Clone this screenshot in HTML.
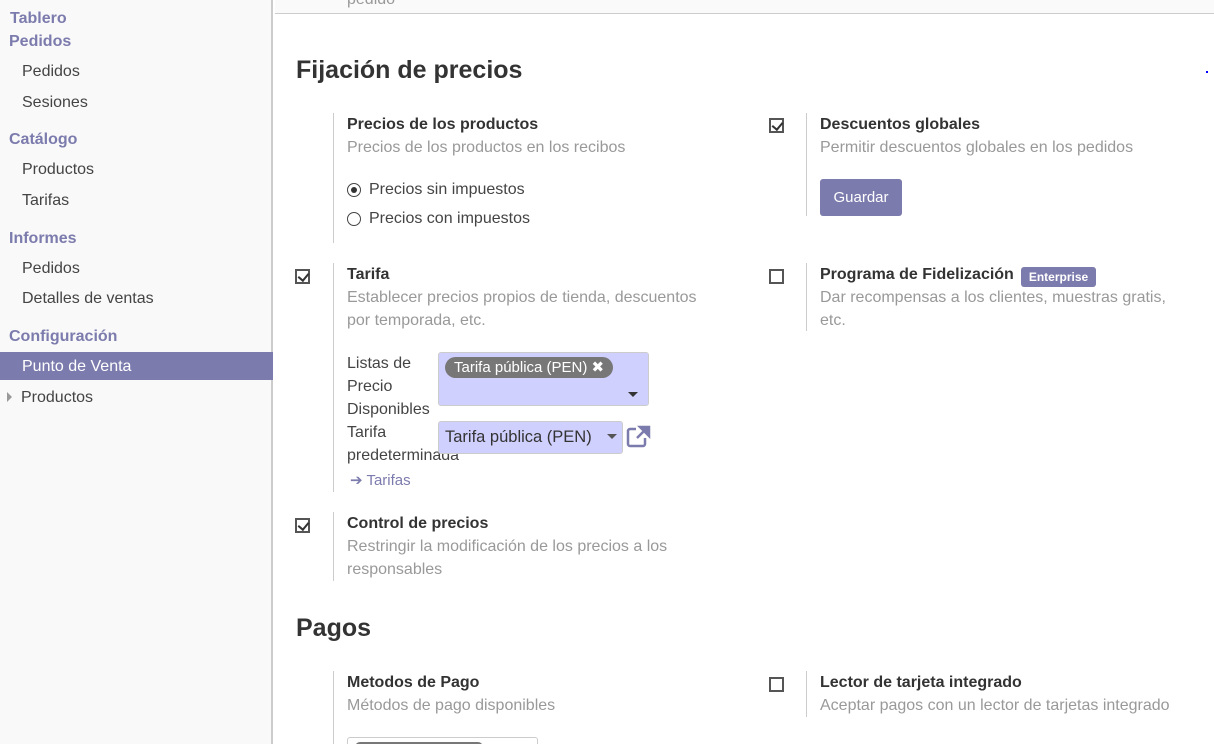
<!DOCTYPE html>
<html style="overflow:hidden;height:744px"><head><meta charset="utf-8"><style>
*{box-sizing:border-box;margin:0;padding:0}
body{width:1214px;height:744px;overflow:hidden;font-family:"Liberation Sans",sans-serif;font-size:16px;color:#444;background:#fff;position:relative}
.sb{position:absolute;left:0;top:0;width:273px;height:744px;background:#f9f9f9;border-right:2px solid #ccc}
.a{position:absolute;white-space:nowrap}
.h{color:#7c7bad;font-weight:bold;font-size:16px}
.it{color:#444;font-size:16px}
.act{position:absolute;left:0;top:352px;width:273px;height:28px;background:#7c7bad}
.t{font-weight:bold;color:#333;font-size:16px}
.d{color:#999;font-size:16px;line-height:23px}
.vl{position:absolute;width:1px;background:#ccc}
.cb{position:absolute;width:15px;height:15px;border:2px solid #555;background:#fff}
.cb.c::after{content:"";position:absolute;left:3px;top:0px;width:5px;height:8px;border:solid #333;border-width:0 2px 2px 0;transform:rotate(40deg)}
.rd{position:absolute;width:14px;height:14px;border:1px solid #444;border-radius:50%}
.rd.on::after{content:"";position:absolute;left:3px;top:3px;width:6px;height:6px;border-radius:50%;background:#333}
.sec{font-size:25px;font-weight:bold;color:#333}
</style></head><body>
<div class="sb">
<div class="a h" style="left:10px;top:10px">Tablero</div>
<div class="a h" style="left:9px;top:33px">Pedidos</div>
<div class="a it" style="left:22px;top:63px">Pedidos</div>
<div class="a it" style="left:22px;top:94px">Sesiones</div>
<div class="a h" style="left:9px;top:131px">Catálogo</div>
<div class="a it" style="left:22px;top:161px">Productos</div>
<div class="a it" style="left:22px;top:192px">Tarifas</div>
<div class="a h" style="left:9px;top:230px">Informes</div>
<div class="a it" style="left:22px;top:260px">Pedidos</div>
<div class="a it" style="left:22px;top:290px">Detalles de ventas</div>
<div class="a h" style="left:9px;top:328px">Configuración</div>
<div class="act"></div>
<div class="a it" style="left:22px;top:358px;color:#fff">Punto de Venta</div>
<div class="a" style="left:7px;top:392px;width:0;height:0;border-left:5px solid #999;border-top:5px solid transparent;border-bottom:5px solid transparent"></div>
<div class="a it" style="left:21px;top:389px">Productos</div>
</div>
<div class="a" style="left:275px;top:0;width:939px;height:14px;background:#fafafa;border-bottom:1px solid #ccc;overflow:hidden"><span class="a d" style="left:72px;top:-12px">pedido</span></div>
<div class="a" style="left:1206px;top:71px;width:2px;height:2px;background:#00f"></div>

<div class="a sec" style="left:296px;top:56px">Fijación de precios</div>

<div class="vl" style="left:333px;top:113px;height:130px"></div>
<div class="a t" style="left:347px;top:116px">Precios de los productos</div>
<div class="a d" style="left:347px;top:136px">Precios de los productos en los recibos</div>
<div class="rd on" style="left:347px;top:183px"></div>
<div class="a it" style="left:369px;top:181px">Precios sin impuestos</div>
<div class="rd" style="left:347px;top:212px"></div>
<div class="a it" style="left:369px;top:210px">Precios con impuestos</div>

<div class="cb c" style="left:769px;top:118px"></div>
<div class="vl" style="left:806px;top:113px;height:103px"></div>
<div class="a t" style="left:820px;top:116px">Descuentos globales</div>
<div class="a d" style="left:820px;top:136px">Permitir descuentos globales en los pedidos</div>
<div class="a" style="left:820px;top:179px;width:82px;height:37px;background:#7c7bad;border-radius:3px;color:#fff;text-align:center;line-height:37px;font-size:15px">Guardar</div>

<div class="cb c" style="left:295px;top:269px"></div>
<div class="vl" style="left:333px;top:263px;height:229px"></div>
<div class="a t" style="left:347px;top:266px">Tarifa</div>
<div class="a d" style="left:347px;top:286px">Establecer precios propios de tienda, descuentos<br>por temporada, etc.</div>
<div class="a it" style="left:347px;top:352px;line-height:23px">Listas de<br>Precio<br>Disponibles<br>Tarifa<br>predeterminada</div>
<div class="a" style="left:438px;top:352px;width:211px;height:54px;background:#d0d0ff;border:1px solid #ccc;border-radius:3px"></div>
<div class="a" style="left:445px;top:357px;height:21px;padding:0 9px;background:#777;color:#fff;border-radius:11px;line-height:21px;font-size:15px">Tarifa pública (PEN) ✖</div>
<div class="a" style="left:628px;top:392px;border-top:5px solid #333;border-left:5px solid transparent;border-right:5px solid transparent"></div>
<div class="a" style="left:438px;top:421px;width:185px;height:33px;background:#d0d0ff;border:1px solid #ccc;border-radius:3px"></div>
<div class="a it" style="left:445px;top:428px;color:#333;font-size:16.5px">Tarifa pública (PEN)</div>
<div class="a" style="left:607px;top:434px;border-top:5px solid #555;border-left:5px solid transparent;border-right:5px solid transparent"></div>
<svg class="a" style="left:626px;top:424px" width="25" height="24" viewBox="0 0 25 24"><path d="M10 5H4a2 2 0 0 0-2 2v13a2 2 0 0 0 2 2h13a2 2 0 0 0 2-2v-6" fill="none" stroke="#7c7bad" stroke-width="2.5"/><path d="M11 14L21 4M14 3h9v9z" fill="#7c7bad" stroke="#7c7bad" stroke-width="2.5"/></svg>
<div class="a" style="left:350px;top:471px;color:#7c7bad;font-size:15px">➔ Tarifas</div>

<div class="cb" style="left:769px;top:269px"></div>
<div class="vl" style="left:806px;top:263px;height:68px"></div>
<div class="a t" style="left:820px;top:266px">Programa de Fidelización</div>
<div class="a" style="left:1021px;top:267px;width:75px;height:20px;background:#7c7bad;color:#fff;border-radius:3px;font-size:12px;font-weight:bold;text-align:center;line-height:20px">Enterprise</div>
<div class="a d" style="left:820px;top:286px">Dar recompensas a los clientes, muestras gratis,<br>etc.</div>

<div class="cb c" style="left:295px;top:518px"></div>
<div class="vl" style="left:333px;top:512px;height:69px"></div>
<div class="a t" style="left:347px;top:515px">Control de precios</div>
<div class="a d" style="left:347px;top:535px">Restringir la modificación de los precios a los<br>responsables</div>

<div class="a sec" style="left:296px;top:614px">Pagos</div>
<div class="vl" style="left:333px;top:671px;height:73px"></div>
<div class="a t" style="left:347px;top:674px">Metodos de Pago</div>
<div class="a d" style="left:347px;top:694px">Métodos de pago disponibles</div>
<div class="a" style="left:347px;top:737px;width:191px;height:7px;border:1px solid #ccc;border-bottom:none;border-radius:3px 3px 0 0;overflow:hidden"><div style="position:absolute;left:7px;top:4px;width:128px;height:10px;background:#777;border-radius:5px"></div></div>
<div class="cb" style="left:769px;top:677px"></div>
<div class="vl" style="left:806px;top:671px;height:46px"></div>
<div class="a t" style="left:820px;top:674px">Lector de tarjeta integrado</div>
<div class="a d" style="left:820px;top:694px">Aceptar pagos con un lector de tarjetas integrado</div>
</body></html>
